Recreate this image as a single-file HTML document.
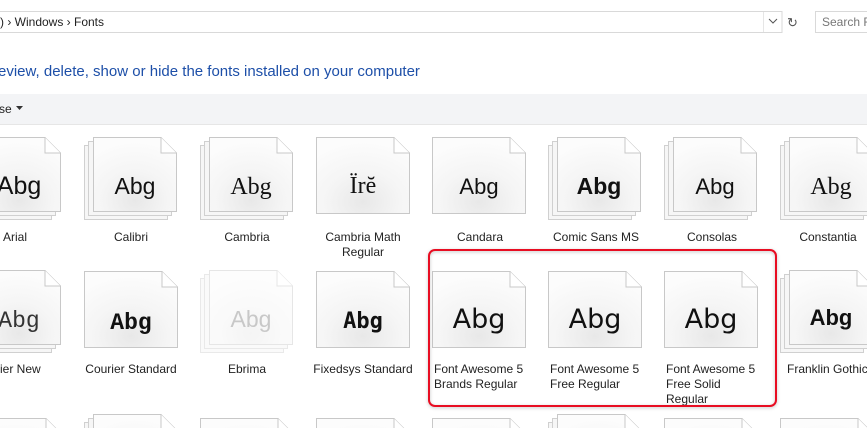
<!DOCTYPE html>
<html><head><meta charset="utf-8"><style>
html,body{margin:0;padding:0;background:#fff;width:867px;height:428px;overflow:hidden}
svg{display:block}
</style></head><body>
<svg width="867" height="428" viewBox="0 0 867 428" xmlns="http://www.w3.org/2000/svg" font-family="Liberation Sans, sans-serif">
<defs>
<radialGradient id="g" cx="0.5" cy="0.85" r="0.8">
<stop offset="0" stop-color="#e8e8e8"/><stop offset="0.5" stop-color="#f5f5f5"/><stop offset="1" stop-color="#fcfcfc"/></radialGradient>
<clipPath id="c"><rect x="0" y="0" width="867" height="428"/></clipPath>
<g id="pg"><path d="M0.5 0.5H78L93.5 16V76.5H0.5Z" fill="url(#g)" stroke="#c8c8c8"/><path d="M78 0.5V16H93.5" fill="#fff" stroke="#c8c8c8"/></g>
<g id="pf"><path d="M0.5 0.5H68L83.5 16V74.5H0.5Z" fill="url(#g)" stroke="#c8c8c8"/><path d="M68 0.5V16H83.5" fill="#fff" stroke="#c8c8c8"/></g>
<g id="pb"><path d="M0.5 0.5H68L83.5 16V74.5H0.5Z" fill="#f6f6f6" stroke="#d0d0d0"/></g>
<g id="st"><use href="#pb" x="0" y="8"/><use href="#pb" x="4" y="4"/><use href="#pf" x="9" y="0"/></g>
<filter id="sh" x="-5%" y="-5%" width="110%" height="115%"><feDropShadow dx="0" dy="1" stdDeviation="1.5" flood-color="#000" flood-opacity="0.25"/></filter>
</defs>
<g clip-path="url(#c)">
<rect x="-2" y="11.5" width="784" height="21" fill="#fff" stroke="#d9d9d9"/>
<line x1="763.5" y1="12" x2="763.5" y2="32" stroke="#e6e6e6"/>
<text x="0" y="26" font-size="12" fill="#222">)  ›  Windows  ›  Fonts</text>
<path d="M769 19l4 4 4-4" fill="none" stroke="#555" stroke-width="1"/>
<text x="787" y="27" font-size="13" fill="#555">↻</text>
<rect x="815.5" y="11.5" width="60" height="21" fill="#fff" stroke="#d9d9d9"/>
<text x="822" y="26" font-size="12" fill="#777">Search F</text>
<text x="-2" y="76" font-size="15" fill="#1d4fa8">eview, delete, show or hide the fonts installed on your computer</text>
<rect x="0" y="94" width="867" height="30" fill="#f3f4f6"/>
<line x1="0" y1="124.5" x2="867" y2="124.5" stroke="#e6e6e6"/>
<text x="-1" y="113" font-size="12" fill="#222">se</text>
<path d="M16 106h7l-3.5 4z" fill="#333"/>

<use href="#st" x="-32" y="137"/><text x="19" y="194" font-size="25" text-anchor="middle" fill="#111">Abg</text>
<use href="#st" x="84" y="137"/><text x="135" y="194" font-size="23" text-anchor="middle" fill="#111">Abg</text>
<use href="#st" x="200" y="137"/><text x="251" y="194" font-size="24" text-anchor="middle" fill="#111" font-family="Liberation Serif, serif">Abg</text>
<use href="#pg" x="316" y="137"/><text x="363" y="193" font-size="24" text-anchor="middle" fill="#111" font-family="Liberation Serif, serif">Ïrĕ</text>
<use href="#pg" x="432" y="137"/><text x="479" y="194" font-size="22" text-anchor="middle" fill="#111">Abg</text>
<use href="#st" x="548" y="137"/><text x="599" y="194" font-size="23" text-anchor="middle" fill="#111" font-weight="bold">Abg</text>
<use href="#st" x="664" y="137"/><text x="715" y="194" font-size="22" text-anchor="middle" fill="#111">Abg</text>
<use href="#st" x="780" y="137"/><text x="831" y="194" font-size="24" text-anchor="middle" fill="#111" font-family="Liberation Serif, serif">Abg</text>
<g font-size="12" fill="#222" text-anchor="middle">
<text x="15" y="241">Arial</text><text x="131" y="241">Calibri</text><text x="247" y="241">Cambria</text>
<text x="363" y="241">Cambria Math</text><text x="363" y="256">Regular</text>
<text x="480" y="241">Candara</text><text x="596" y="241">Comic Sans MS</text><text x="712" y="241">Consolas</text><text x="828" y="241">Constantia</text>
</g>

<use href="#st" x="-32" y="270"/><text x="19" y="327" font-size="23" text-anchor="middle" fill="#333" font-family="Liberation Mono, monospace">Abg</text>
<use href="#pg" x="84" y="271"/><text x="131" y="329" font-size="23" text-anchor="middle" fill="#111" font-family="Liberation Mono, monospace" font-weight="bold">Abg</text>
<g opacity="0.45"><use href="#st" x="200" y="270"/></g><text x="251" y="327" font-size="23" text-anchor="middle" fill="#c8c8c8">Abg</text>
<use href="#pg" x="316" y="271"/><text x="363" y="328" font-size="22" text-anchor="middle" fill="#111" font-family="DejaVu Sans Mono, monospace" font-weight="bold">Abg</text>
<use href="#pg" x="432" y="271"/><text x="479" y="328" font-size="27" text-anchor="middle" fill="#111" font-family="DejaVu Sans, sans-serif">Abg</text>
<use href="#pg" x="548" y="271"/><text x="595" y="328" font-size="27" text-anchor="middle" fill="#111" font-family="DejaVu Sans, sans-serif">Abg</text>
<use href="#pg" x="664" y="271"/><text x="711" y="328" font-size="27" text-anchor="middle" fill="#111" font-family="DejaVu Sans, sans-serif">Abg</text>
<use href="#st" x="780" y="270"/><text x="831" y="325" font-size="22" text-anchor="middle" fill="#111" font-weight="bold">Abg</text>
<g font-size="12" fill="#222">
<text x="15" y="373" text-anchor="middle">urier New</text>
<text x="131" y="373" text-anchor="middle">Courier Standard</text>
<text x="247" y="373" text-anchor="middle">Ebrima</text>
<text x="363" y="373" text-anchor="middle">Fixedsys Standard</text>
<text x="434" y="373">Font Awesome 5</text><text x="434" y="388">Brands Regular</text>
<text x="550" y="373">Font Awesome 5</text><text x="550" y="388">Free Regular</text>
<text x="666" y="373">Font Awesome 5</text><text x="666" y="388">Free Solid</text><text x="666" y="403">Regular</text>
<text x="787" y="373">Franklin Gothic</text>
</g>
<rect x="429" y="250" width="347" height="156" rx="6" fill="none" stroke="#e81123" stroke-width="2" filter="url(#sh)"/>

<use href="#pg" x="-32" y="418"/>
<use href="#st" x="84" y="414"/>
<use href="#pg" x="200" y="418"/>
<use href="#pg" x="316" y="418"/>
<use href="#pg" x="432" y="418"/>
<use href="#st" x="548" y="414"/>
<use href="#pg" x="664" y="418"/>
<use href="#pg" x="780" y="418"/>
</g>
</svg>
</body></html>
